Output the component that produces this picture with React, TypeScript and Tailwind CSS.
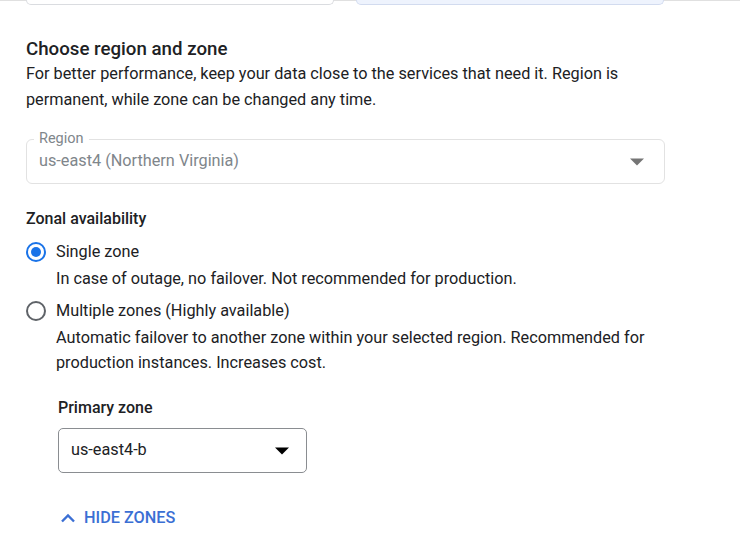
import React from "react";

export default function App() {
  return (
    <div className="w-[740px] h-[552px] bg-white overflow-hidden relative text-[#202124]" style={{ fontFamily: "Roboto, 'Liberation Sans', sans-serif" }}>
      <div className="h-px bg-[#e0e0e0] w-full" />
      <div className="flex gap-[22px] pl-[26px] -mt-px">
        <div className="w-[308px] h-[5px] border border-t-0 border-[#dadce0] rounded-b-[6px] bg-white" />
        <div className="w-[308px] h-[5px] border border-t-0 border-[#d2dbef] rounded-b-[6px] bg-[#eef3fd]" />
      </div>
      <div className="pl-[26px] pr-[75px] pt-[32px]">
        <h2 className="text-[18.7px] leading-[24px] font-medium text-[#202124]">Choose region and zone</h2>
        <p className="text-[16.25px] leading-[26px] text-[#202124] mt-[0px]">
          For better performance, keep your data close to the services that need it. Region is permanent, while zone can be changed any time.
        </p>
        <div className="relative mt-[26px] h-[45px] border border-[#e2e2e2] rounded-[6px] flex items-center pl-[12px] pr-[20px]">
          <span className="absolute -top-[10px] left-[7px] px-[5px] bg-white text-[14.5px] leading-[18px] text-[#80868b]">Region</span>
          <span className="text-[16.25px] text-[#80868b] flex-1">us-east4 (Northern Virginia)</span>
          <svg width="14" height="8" viewBox="0 0 10 5" className="mt-[1px]"><path d="M0 0L5 5L10 0Z" fill="#757575" /></svg>
        </div>
        <div className="mt-[24px] text-[16px] leading-[22px] font-medium">Zonal availability</div>
        <div className="mt-[11px] flex items-center gap-[10px]">
          <span className="w-[20px] h-[20px] rounded-full border-2 border-[#1a73e8] flex items-center justify-center">
            <span className="w-[10px] h-[10px] rounded-full bg-[#1a73e8]" />
          </span>
          <span className="text-[16.25px] leading-[22px]">Single zone</span>
        </div>
        <div className="pl-[30px] mt-[5px] text-[16.25px] leading-[22px] text-[#202124]">In case of outage, no failover. Not recommended for production.</div>
        <div className="mt-[10px] flex items-center gap-[10px]">
          <span className="w-[20px] h-[20px] rounded-full border-2 border-[#5f6368]" />
          <span className="text-[16.25px] leading-[22px]">Multiple zones (Highly available)</span>
        </div>
        <div className="pl-[30px] mt-[3px] text-[16.25px] leading-[25px] text-[#202124] pr-[10px]">
          Automatic failover to another zone within your selected region. Recommended for production instances. Increases cost.
        </div>
        <div className="pl-[32px]">
          <div className="mt-[22px] text-[16px] leading-[22px] font-medium">Primary zone</div>
          <div className="mt-[9px] w-[249px] h-[45px] border border-[#8a8d91] rounded-[5px] flex items-center pl-[12px] pr-[17px]">
            <span className="flex-1 text-[16.25px] text-[#202124]">us-east4-b</span>
            <svg width="14" height="8" viewBox="0 0 10 5"><path d="M0 0L5 5L10 0Z" fill="#000" /></svg>
          </div>
          <button className="mt-[34px] flex items-center gap-[8px] text-[#3b6fd4] text-[16.25px] font-medium leading-[22px] ml-[2px]">
            <svg width="16" height="10" viewBox="0 0 16 10"><path d="M2 8.5L8 2.5L14 8.5" fill="none" stroke="#3b6fd4" strokeWidth="2.4" /></svg>
            HIDE ZONES
          </button>
        </div>
      </div>
    </div>
  );
}
